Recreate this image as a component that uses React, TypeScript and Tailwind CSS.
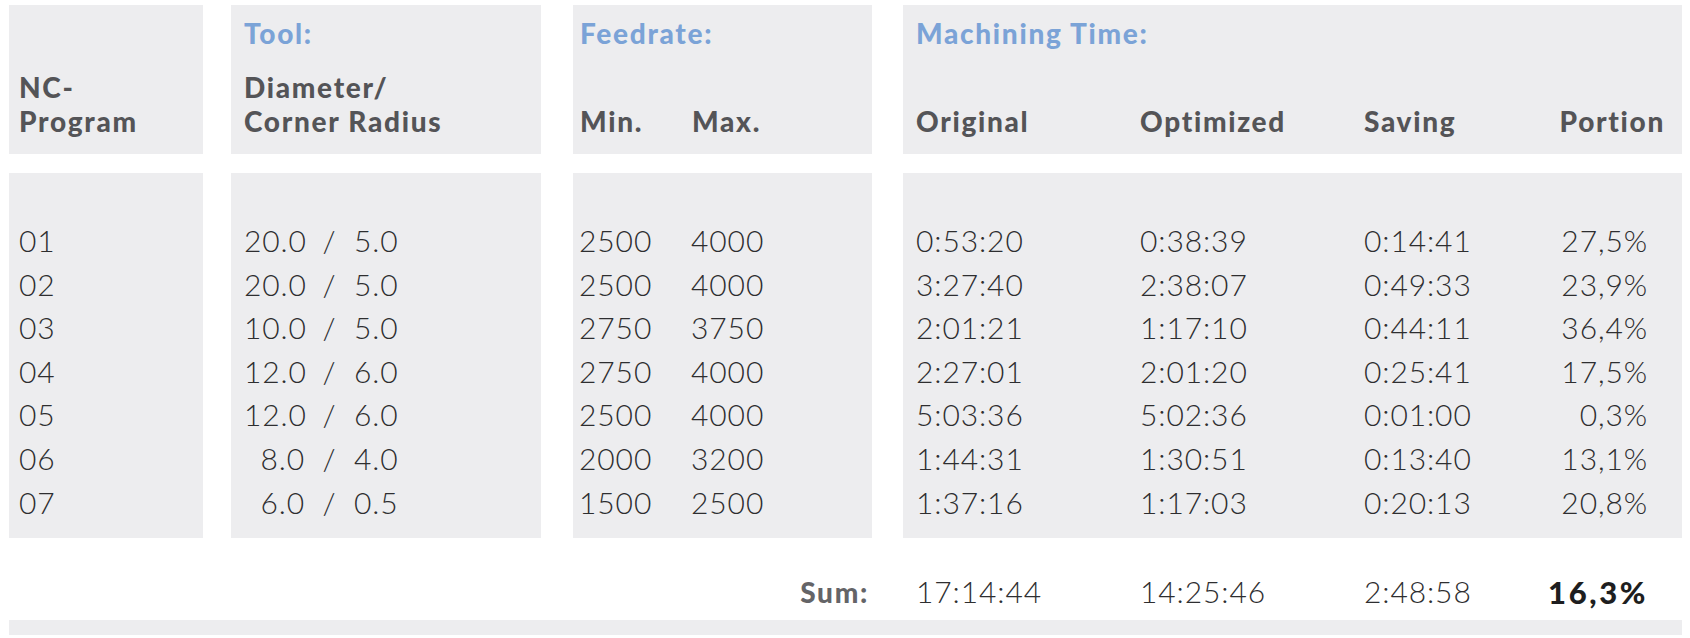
import React from "react";

const rows = [
  ["01", "20.0", "5.0", "2500", "4000", "0:53:20", "0:38:39", "0:14:41", "27,5%"],
  ["02", "20.0", "5.0", "2500", "4000", "3:27:40", "2:38:07", "0:49:33", "23,9%"],
  ["03", "10.0", "5.0", "2750", "3750", "2:01:21", "1:17:10", "0:44:11", "36,4%"],
  ["04", "12.0", "6.0", "2750", "4000", "2:27:01", "2:01:20", "0:25:41", "17,5%"],
  ["05", "12.0", "6.0", "2500", "4000", "5:03:36", "5:02:36", "0:01:00", "0,3%"],
  ["06", "8.0", "4.0", "2000", "3200", "1:44:31", "1:30:51", "0:13:40", "13,1%"],
  ["07", "6.0", "0.5", "1500", "2500", "1:37:16", "1:17:03", "0:20:13", "20,8%"],
];

const head = "text-[28px] font-black tracking-[1.7px] text-[#545457] leading-[34px]";
const title = "text-[28px] font-black tracking-[1.7px] text-[#7ba3d7] leading-[34px]";
const cell = "h-[43.6px] leading-[43.6px]";

export default function App() {
  return (
    <div
      className="w-[1690px] h-[638px] bg-white overflow-hidden"
      style={{ fontFamily: "Lato, 'Liberation Sans', sans-serif" }}
    >
      <div className="pl-[9px] pt-[5px]">
        {/* Header row */}
        <div className="flex h-[149px]">
          <div className="w-[194px] mr-[28px] bg-[#ededef] flex flex-col justify-end pl-[10px] pb-[16px]">
            <div className={head}>NC-</div>
            <div className={head}>Program</div>
          </div>
          <div className="w-[310px] mr-[32px] bg-[#ededef] flex flex-col justify-between pl-[13px] pt-[11px] pb-[16px]">
            <div className={title}>Tool:</div>
            <div>
              <div className={head}>Diameter/</div>
              <div className={head}>Corner Radius</div>
            </div>
          </div>
          <div className="w-[299px] mr-[31px] bg-[#ededef] flex flex-col justify-between pl-[7px] pt-[11px] pb-[16px]">
            <div className={title}>Feedrate:</div>
            <div className={`grid grid-cols-[112px_1fr] ${head}`}>
              <div>Min.</div>
              <div>Max.</div>
            </div>
          </div>
          <div className="w-[779px] bg-[#ededef] flex flex-col justify-between pl-[13px] pr-[17px] pt-[11px] pb-[16px]">
            <div className={title}>Machining Time:</div>
            <div className={`grid grid-cols-[224px_224px_1fr_auto] ${head}`}>
              <div>Original</div>
              <div>Optimized</div>
              <div>Saving</div>
              <div className="text-right">Portion</div>
            </div>
          </div>
        </div>

        {/* Data row */}
        <div className="flex h-[365px] mt-[19px] text-[30px] text-[#2e2e30] font-light tracking-[0.9px]">
          <div className="w-[194px] mr-[28px] bg-[#ededef] pl-[10px] pt-[46px]">
            {rows.map((r) => (
              <div key={r[0]} className={cell}>{r[0]}</div>
            ))}
          </div>
          <div className="w-[310px] mr-[32px] bg-[#ededef] pl-[13px] pt-[46px]">
            {rows.map((r) => (
              <div key={r[0]} className={`grid grid-cols-[61px_49px_1fr] ${cell}`}>
                <div className="text-right">{r[1]}</div>
                <div className="text-center">/</div>
                <div>{r[2]}</div>
              </div>
            ))}
          </div>
          <div className="w-[299px] mr-[31px] bg-[#ededef] pl-[6px] pt-[46px]">
            {rows.map((r) => (
              <div key={r[0]} className={`grid grid-cols-[112px_1fr] ${cell}`}>
                <div>{r[3]}</div>
                <div>{r[4]}</div>
              </div>
            ))}
          </div>
          <div className="w-[779px] bg-[#ededef] pl-[13px] pr-[34px] pt-[46px]">
            {rows.map((r) => (
              <div key={r[0]} className={`grid grid-cols-[224px_224px_1fr_auto] ${cell}`}>
                <div>{r[5]}</div>
                <div>{r[6]}</div>
                <div>{r[7]}</div>
                <div className="text-right">{r[8]}</div>
              </div>
            ))}
          </div>
        </div>

        {/* Sum row */}
        <div className="flex h-[40px] mt-[34px] items-center">
          <div className="w-[863px] text-right text-[28px] font-black tracking-[1.7px] text-[#646467] pr-[3px]">Sum:</div>
          <div className="w-[31px]" />
          <div className="w-[779px] pl-[13px] pr-[34px] grid grid-cols-[224px_224px_1fr_auto] text-[30px] font-light text-[#2e2e30] tracking-[0.9px]">
            <div>17:14:44</div>
            <div>14:25:46</div>
            <div>2:48:58</div>
            <div className="text-right text-[31px] font-black tracking-[2.6px] text-[#1e1e20]">16,3%</div>
          </div>
        </div>

        {/* Bottom bar */}
        <div className="w-[1673px] h-[15px] mt-[8px] bg-[#ededef]" />
      </div>
    </div>
  );
}
